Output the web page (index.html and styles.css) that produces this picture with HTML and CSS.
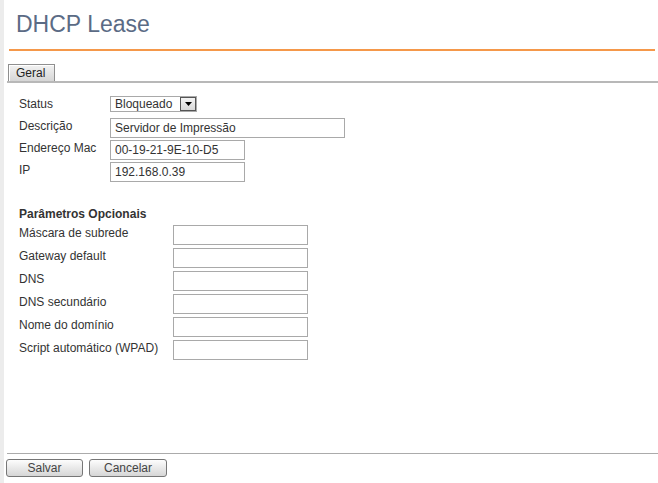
FILE: index.html
```html
<!DOCTYPE html>
<html lang="pt">
<head>
<meta charset="utf-8">
<title>DHCP Lease</title>
<link rel="stylesheet" href="styles.css">
</head>
<body>
<div class="page">
  <div class="strip"></div>
  <div class="main">
    <div class="header"><h1 class="title">DHCP Lease</h1></div>
    <div class="tabs"><span class="tab">Geral</span></div>
    <div class="form">
      <div class="grid grid-main">
        <label class="lbl">Status</label>
        <div class="ctl">
          <span class="select-wrap">
            <select class="select"><option>Bloqueado</option></select>
            <span class="arrow"><svg width="7" height="4" viewBox="0 0 7 4"><path d="M0 0h7L3.5 4z" fill="#000"/></svg></span>
          </span>
        </div>
        <label class="lbl">Descrição</label>
        <div class="ctl"><input class="inp inp-wide" type="text" value="Servidor de Impressão"></div>
        <label class="lbl">Endereço Mac</label>
        <div class="ctl"><input class="inp inp-med" type="text" value="00-19-21-9E-10-D5"></div>
        <label class="lbl">IP</label>
        <div class="ctl"><input class="inp inp-med" type="text" value="192.168.0.39"></div>
      </div>
      <div class="section-title">Parâmetros Opcionais</div>
      <div class="grid grid-opt">
        <label class="lbl2">Máscara de subrede</label><input class="inp inp-med" type="text">
        <label class="lbl2">Gateway default</label><input class="inp inp-med" type="text">
        <label class="lbl2">DNS</label><input class="inp inp-med" type="text">
        <label class="lbl2">DNS secundário</label><input class="inp inp-med" type="text">
        <label class="lbl2">Nome do domínio</label><input class="inp inp-med" type="text">
        <label class="lbl2">Script automático (WPAD)</label><input class="inp inp-med" type="text">
      </div>
    </div>
    <div class="footer">
      <button class="btn btn-save" type="button">Salvar</button>
      <button class="btn btn-cancel" type="button">Cancelar</button>
    </div>
  </div>
</div>
</body>
</html>
```
FILE: styles.css
```css
* { box-sizing: border-box; }
html, body { margin: 0; padding: 0; background: #fff; }
body { font-family: "Liberation Sans", Arial, sans-serif; font-size: 12px; color: #333; }
.page { display: flex; height: 483px; overflow: hidden; }
.strip { width: 4px; background: #ececec; flex: none; }
.main { flex: 1; padding-left: 3px; display: flex; flex-direction: column; }
.header { margin: 0 3px 0 2px; padding: 11px 0 12px 7px; border-bottom: 2px solid #f5984a; }
.title { margin: 0; font-size: 23px; line-height: 26px; font-weight: normal; color: #5b6b85; }
.tabs { margin-top: 13px; border-bottom: 2px solid #b8b8b8; padding-left: 1px; display: flex; }
.tab { display: block; width: 47px; height: 17px; line-height: 16px; padding-left: 7px; border: 1px solid #8f8f8f; border-bottom: none; background: linear-gradient(#f2f2f2, #d6d6d6); color: #222; box-shadow: inset 1px 1px 0 #fff; }
.form { flex: 1; padding: 12px 0 0 12px; }
.grid { display: grid; align-items: start; }
.grid-main { grid-template-columns: 91px auto; grid-auto-rows: 22px; }
.grid-opt { grid-template-columns: 154px auto; grid-auto-rows: 23px; }
.lbl { line-height: 14px; padding-top: 2px; color: #333; }
.lbl2 { line-height: 14px; padding-top: 1px; color: #333; }
.ctl { display: flex; }
.inp { height: 20px; border: 1px solid #a9a9a9; padding: 0 4px; font-family: "Liberation Sans", Arial, sans-serif; font-size: 12px; color: #333; background: #fff; outline: none; margin: 0; }
.inp-wide { width: 235px; }
.inp-med { width: 135px; }
.grid-main .inp { margin-top: 1px; }
.select-wrap { position: relative; display: inline-block; margin-top: 1px; }
.select { appearance: none; -webkit-appearance: none; width: 87px; height: 16px; border: 1px solid #a9a9a9; border-radius: 0; padding: 0 0 0 4px; font-family: "Liberation Sans", Arial, sans-serif; font-size: 12px; line-height: 14px; color: #333; background: #fff; margin: 0; outline: none; }
.arrow { position: absolute; right: 1px; top: 1px; width: 16px; height: 14px; border: 1px solid #555; background: linear-gradient(#f4f4f4, #d8d8d8); display: flex; align-items: center; justify-content: center; }
.section-title { font-weight: bold; margin-top: 24px; line-height: 14px; height: 18px; color: #333; }
.footer { border-top: 1px solid #ababab; padding: 5px 0 6px 0; display: flex; gap: 6px; margin-top: auto; }
.btn { height: 18px; border: 1px solid #767676; border-radius: 3px; background: linear-gradient(#fdfdfd, #e9e9e9 50%, #d6d6d6); font-family: "Liberation Sans", Arial, sans-serif; font-size: 12px; color: #444; padding: 0; margin: 0; line-height: 16px; }
.btn-save { width: 77px; margin-left: -1px; }
.btn-cancel { width: 78px; }
```
